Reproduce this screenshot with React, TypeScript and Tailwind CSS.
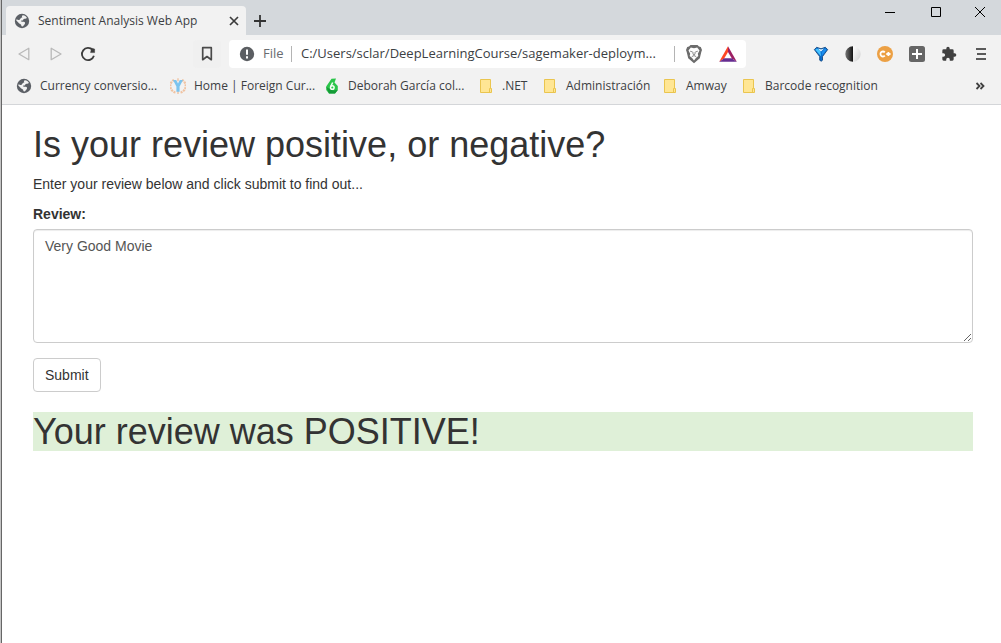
import { useState } from "react";
import type { ReactNode } from "react";

function Globe() {
  return (
    <svg viewBox="0 0 16 16" className="size-4 shrink-0" aria-hidden="true">
      <circle cx="8" cy="8" r="7.2" fill="#5c6066" />
      <path d="M9 2.300c1.700.2 3.200 1.200 4 2.600-.9 0-1.300.9-2.400.8-.8 0-1.200.3-1.300.9 0 .9-.9 1-1.700.9-.8 0-1 .8-.3 1.100 1 .2 2.400-.2 3.200.5.8.6.700 1.700 0 2.300-.9.600-1 1.800-2.300 2.100-.9 0-.8-1.100-1.100-1.800-.3-.7-1.200-.7-1.900-1.300C4 9.500 3 8.300 2.300 7.600c.1-.5.200-.9.400-1.300.8.6 1.800.9 2.800.5.700-.4.5-1 1.200-1.600.6-.4 1.500-.3 1.500-1 0-.6-.4-.8-.2-1.300.1-.4.500-.6 1-.6z" fill="#f2f2f2" />
    </svg>
  );
}

function Folder() {
  return (
    <svg viewBox="0 0 16 16" className="size-4 shrink-0" aria-hidden="true">
      <path d="M2.500 1.500h10v9h1v4h-11z" fill="#ffe694" stroke="#eac54f" />
      <path d="M11.500 14.500v-4h1" fill="none" stroke="#eac54f" />
    </svg>
  );
}

function Laurel() {
  return (
    <svg viewBox="0 0 16 16" className="size-4 shrink-0" aria-hidden="true">
      <path d="M4 2A6.700 6.700 0 0 0 6 14.600M12 2a6.700 6.700 0 0 1-2 12.600" fill="none" stroke="#f0c3a2" strokeWidth="2.200" strokeDasharray="2 .8" />
      <path d="M8 .3v3M8 12v4" stroke="#f0c3a2" strokeWidth="1.400" />
      <path d="M3 2h3.200L8 5.600 9.800 2H13L9.600 8.500v5.200H6.400V8.500z" fill="#7cc4ee" />
    </svg>
  );
}

function Drop() {
  return (
    <svg viewBox="0 0 16 16" className="size-4 shrink-0" aria-hidden="true">
      <path d="M7.500.8 12 .6 10.500 4.500 13.800 8v4L11 15.500H5L2.200 12V8.500z" fill="#2bc54a" />
      <path d="M2.200 9 5 15.500h6l2.800-3.500-5 .5z" fill="#159a38" />
      <circle cx="8.300" cy="9.500" r="1.800" fill="#2bc54a" stroke="#f4fff4" strokeWidth="1.500" />
      <path d="m6.700 8.500 2-4" stroke="#f4fff4" strokeWidth="1.500" />
    </svg>
  );
}

const bookmarks: { label: string; icon: ReactNode; width: string }[] = [
  { label: "Currency conversio...", icon: <Globe />, width: "w-[114px]" },
  { label: "Home | Foreign Cur...", icon: <Laurel />, width: "w-[114px]" },
  { label: "Deborah García col...", icon: <Drop />, width: "w-[114px]" },
  { label: ".NET", icon: <Folder />, width: "w-6" },
  { label: "Administración", icon: <Folder />, width: "w-20" },
  { label: "Amway", icon: <Folder />, width: "w-[39px]" },
  { label: "Barcode recognition", icon: <Folder />, width: "w-28" },
];

function IconButton({ label, className, children }: { label: string; className: string; children: ReactNode }) {
  return (
    <button type="button" aria-label={label} className={`flex shrink-0 items-center justify-center ${className}`}>
      {children}
    </button>
  );
}

function TabStrip() {
  return (
    <header className="flex h-[35px] items-start bg-[#d4d8dc] pl-1">
      <div className="mt-[6px] flex h-[29px] w-60 shrink-0 items-center rounded-t bg-[#f2f2f2] pr-1 pl-2">
        <Globe />
        <span className="ml-2 flex-1 whitespace-nowrap">Sentiment Analysis Web App</span>
        <IconButton label="Close tab" className="size-4">
          <svg viewBox="0 0 16 16" className="size-4"><path d="m4 4 8 8M12 4l-8 8" stroke="#3c3c3c" strokeWidth="1.700" /></svg>
        </IconButton>
      </div>
      <IconButton label="New tab" className="mt-[6px] h-[29px] w-7">
        <svg viewBox="0 0 16 16" className="size-4"><path d="M8 2v12M2 8h12" stroke="#333" strokeWidth="1.800" /></svg>
      </IconButton>
      <div className="ml-auto flex">
        <IconButton label="Minimize" className="h-6 w-[46px]">
          <svg viewBox="0 0 12 12" className="size-3"><path d="M1 6.500h10" stroke="#000" /></svg>
        </IconButton>
        <IconButton label="Maximize" className="h-6 w-[46px]">
          <svg viewBox="0 0 12 12" className="size-3"><path d="M1.500 1.500h9v9h-9z" fill="none" stroke="#000" /></svg>
        </IconButton>
        <IconButton label="Close" className="h-6 w-[42px]">
          <svg viewBox="0 0 12 12" className="size-3"><path d="m1 1 10 10M11 1 1 11" stroke="#000" /></svg>
        </IconButton>
      </div>
    </header>
  );
}

function Toolbar() {
  return (
    <div className="flex h-[38px] items-center pr-1">
      <div className="flex w-[191px] shrink-0 pl-[6px]">
        <IconButton label="Back" className="h-7 w-8">
          <svg viewBox="0 0 16 16" className="size-4"><path d="M12.800 2.300v11.400L3 8z" fill="none" stroke="#b9b9b9" strokeWidth="1.300" strokeLinejoin="round" /></svg>
        </IconButton>
        <IconButton label="Forward" className="h-7 w-8">
          <svg viewBox="0 0 16 16" className="size-4"><path d="M3.200 2.300v11.400L13 8z" fill="none" stroke="#b9b9b9" strokeWidth="1.300" strokeLinejoin="round" /></svg>
        </IconButton>
        <IconButton label="Reload" className="h-7 w-8">
          <svg viewBox="0 0 16 16" className="size-4">
            <path d="M12.600 4A6.100 6.100 0 1 0 13.900 9.800" fill="none" stroke="#3c3c3c" strokeWidth="1.800" />
            <path d="M11.500 2.200 14.600 3v3.600h-4z" fill="#3c3c3c" stroke="#3c3c3c" strokeWidth=".5" strokeLinejoin="round" />
          </svg>
        </IconButton>
      </div>
      <IconButton label="Bookmark this page" className="h-7 w-7 rounded bg-[#f0f0f0]">
        <svg viewBox="0 0 16 16" className="size-4"><path d="M3.700 1.700h8.600v12L8 10.500l-4.300 3.200z" fill="none" stroke="#4a4a4a" strokeWidth="1.700" strokeLinejoin="round" /></svg>
      </IconButton>
      <div className="ml-2 flex h-7 min-w-0 flex-[0_1_517px] items-center rounded bg-white pr-[9px] pl-[10px] text-[13px]">
        <svg viewBox="0 0 16 16" className="size-4 shrink-0" aria-hidden="true">
          <circle cx="8" cy="8" r="7.200" fill="#5b5e62" />
          <path d="M8 3.500v5.200M8 10.300v2.200" stroke="#fff" strokeWidth="2" />
        </svg>
        <span className="ml-2 w-7 text-[#696c70]">File</span>
        <span className="h-4 w-px bg-[#b4b4b4]" />
        <input
          aria-label="Address"
          readOnly
          defaultValue="C:/Users/sclar/DeepLearningCourse/sagemaker-deploym..."
          className="ml-[9px] min-w-0 flex-1 bg-transparent text-[#3c4043] outline-none"
        />
        <span className="h-4 w-px bg-[#b4b4b4]" />
        <IconButton label="Shields" className="ml-[10px] h-5 w-[18px]">
          <svg viewBox="0 0 18 20" className="h-5 w-[18px]">
            <path d="M5.500 1h7l1.500 1.600 1.800.4L17 6l-.7 2-1.500 6.200L9 19.200l-5.800-5L1.700 8 1 6l1.200-3L4 2.600z" fill="#6c6c6c" />
            <path d="M5.800 3.600 9 4.200l3.200-.6 2.300 3-1.700 3.200.5 2.300-2.400 2L9 16.400l-1.900-2.300-2.400-2 .5-2.300-1.700-3.200z" fill="#fff" />
            <path d="m5.200 7.200 2.500.8M12.800 7.200l-2.500.8M8 8.200v2l1 .9 1-.9v-2M6.800 12.600 9 11.600l2.200 1" fill="none" stroke="#6c6c6c" strokeWidth=".8" />
          </svg>
        </IconButton>
        <IconButton label="Rewards" className="ml-4 h-5 w-[18px]">
          <svg viewBox="0 0 18 16" className="h-4 w-[18px]">
            <path d="M9 .3.200 15.700 5.300 12.300 9 6z" fill="#ff4724" />
            <path d="M9 .3 17.800 15.700l-5.100-3.400L9 6z" fill="#9e1f63" />
            <path d="m.2 15.700 5.100-3.400h7.400l5.100 3.400z" fill="#662d91" />
          </svg>
        </IconButton>
      </div>
      <div className="ml-auto flex">
        <IconButton label="Funnel extension" className="h-7 w-8">
          <svg viewBox="0 0 16 16" className="size-4">
            <path d="M1.300 3.600 3.700 1.300 8 2.800l4.300-1.500 2.400 2.300-5.200 7v3.600l-1.300 1-1.500-1v-3.600z" fill="#0b6fd0" stroke="#0a3d75" strokeWidth=".8" />
            <path d="M2.300 3.800 4 2.400l3.300 2.200.7 5.600z" fill="#45c3ff" />
            <path d="M5 2.600 8 3.600l3-1-3 3z" fill="#e8f8ff" />
            <path d="m12 2.400 1.600 1.300L8.800 10V6z" fill="#1d8fef" />
          </svg>
        </IconButton>
        <IconButton label="Contrast extension" className="h-7 w-8">
          <svg viewBox="0 0 16 16" className="size-4">
            <defs>
              <linearGradient id="dark" x1="0" x2="1"><stop stopColor="#777" /><stop offset="1" stopColor="#111" /></linearGradient>
              <linearGradient id="light" x1="0" x2="1" y2="1"><stop stopColor="#fff" /><stop offset="1" stopColor="#cfcfcf" /></linearGradient>
            </defs>
            <path d="M8 .3a7.700 7.700 0 0 0 0 15.400z" fill="url(#dark)" />
            <path d="M8 .3a7.700 7.700 0 0 1 0 15.400z" fill="url(#light)" />
          </svg>
        </IconButton>
        <IconButton label="C plus extension" className="h-7 w-8">
          <svg viewBox="0 0 16 16" className="size-4">
            <circle cx="8" cy="8" r="8" fill="#eca044" />
            <path d="M7.800 6.300A2.500 2.500 0 1 0 7.800 9.700M9.300 8h4.200M11.400 5.900v4.200" fill="none" stroke="#fff" strokeWidth="1.800" />
          </svg>
        </IconButton>
        <IconButton label="Add extension" className="h-7 w-8">
          <svg viewBox="0 0 16 16" className="size-4">
            <rect width="16" height="16" rx="2.500" fill="#666" />
            <path d="M8 3v10M3 8h10" stroke="#fff" strokeWidth="2" />
          </svg>
        </IconButton>
        <IconButton label="Extensions" className="h-7 w-8">
          <svg viewBox="0 0 24 24" className="size-4">
            <path d="M20.500 11H19V7a2 2 0 0 0-2-2h-4V3.500a2.500 2.500 0 0 0-5 0V5H4a2 2 0 0 0-2 2v3.800h1.500a2.700 2.700 0 0 1 0 5.400H2V20a2 2 0 0 0 2 2h3.800v-1.500a2.700 2.700 0 0 1 5.400 0V22H17a2 2 0 0 0 2-2v-4h1.500a2.500 2.500 0 0 0 0-5z" fill="#404040" />
          </svg>
        </IconButton>
        <IconButton label="Menu" className="h-7 w-8">
          <svg viewBox="0 0 16 16" className="size-4"><path d="M3 3h10M4 8h9M3 13h10" stroke="#5a5a5a" strokeWidth="1.800" /></svg>
        </IconButton>
      </div>
    </div>
  );
}

function BookmarksBar() {
  return (
    <nav aria-label="Bookmarks" className="flex h-8 items-center gap-4 border-b border-[#d4d6d9] pr-[13px] pb-[5px] pl-[14px]">
      {bookmarks.map(({ label, icon, width }) => (
        <a key={label} href="#" className="flex items-center gap-2 whitespace-nowrap">
          {icon}
          <span className={width}>{label}</span>
        </a>
      ))}
      <IconButton label="More bookmarks" className="ml-auto size-4">
        <svg viewBox="0 0 16 16" className="size-4"><path d="m4.500 5 3 3-3 3M8.500 5l3 3-3 3" fill="none" stroke="#404040" strokeWidth="1.800" /></svg>
      </IconButton>
    </nav>
  );
}

function ReviewPage() {
  const [review, setReview] = useState("Very Good Movie");
  return (
    <main className="bg-white pt-5 pr-7 pl-[31px] font-['Liberation_Sans',Arial,sans-serif] text-sm leading-5 text-[#333]">
      <h1 className="text-4xl leading-[39px] font-medium">Is your review positive, or negative?</h1>
      <p className="mt-[10px]">Enter your review below and click submit to find out...</p>
      <form className="mt-[10px]" onSubmit={(event) => event.preventDefault()}>
        <label htmlFor="review" className="block font-bold">Review:</label>
        <textarea
          id="review"
          rows={5}
          value={review}
          onChange={(event) => setReview(event.target.value)}
          className="mt-[5px] block w-full resize rounded border border-[#ccc] px-[11px] py-[6px] text-[#555] shadow-[inset_0_1px_1px_rgba(0,0,0,0.075)] outline-none"
        />
        <button type="submit" className="mt-[15px] block rounded border border-[#ccc] bg-white px-[11px] py-[6px]">Submit</button>
      </form>
      <h1 className="mt-5 bg-[#dff0d8] text-4xl leading-[39px] font-medium">Your review was POSITIVE!</h1>
    </main>
  );
}

export default function App() {
  return (
    <div className="min-h-screen border-l border-[#c4c4c4] bg-white">
      <div className="min-h-screen border-l border-[#666]">
        <div className="bg-[#f2f2f2] font-['Open_Sans','Noto_Sans',sans-serif] text-xs text-[#3c4043]">
          <TabStrip />
          <Toolbar />
          <BookmarksBar />
        </div>
        <ReviewPage />
      </div>
    </div>
  );
}
